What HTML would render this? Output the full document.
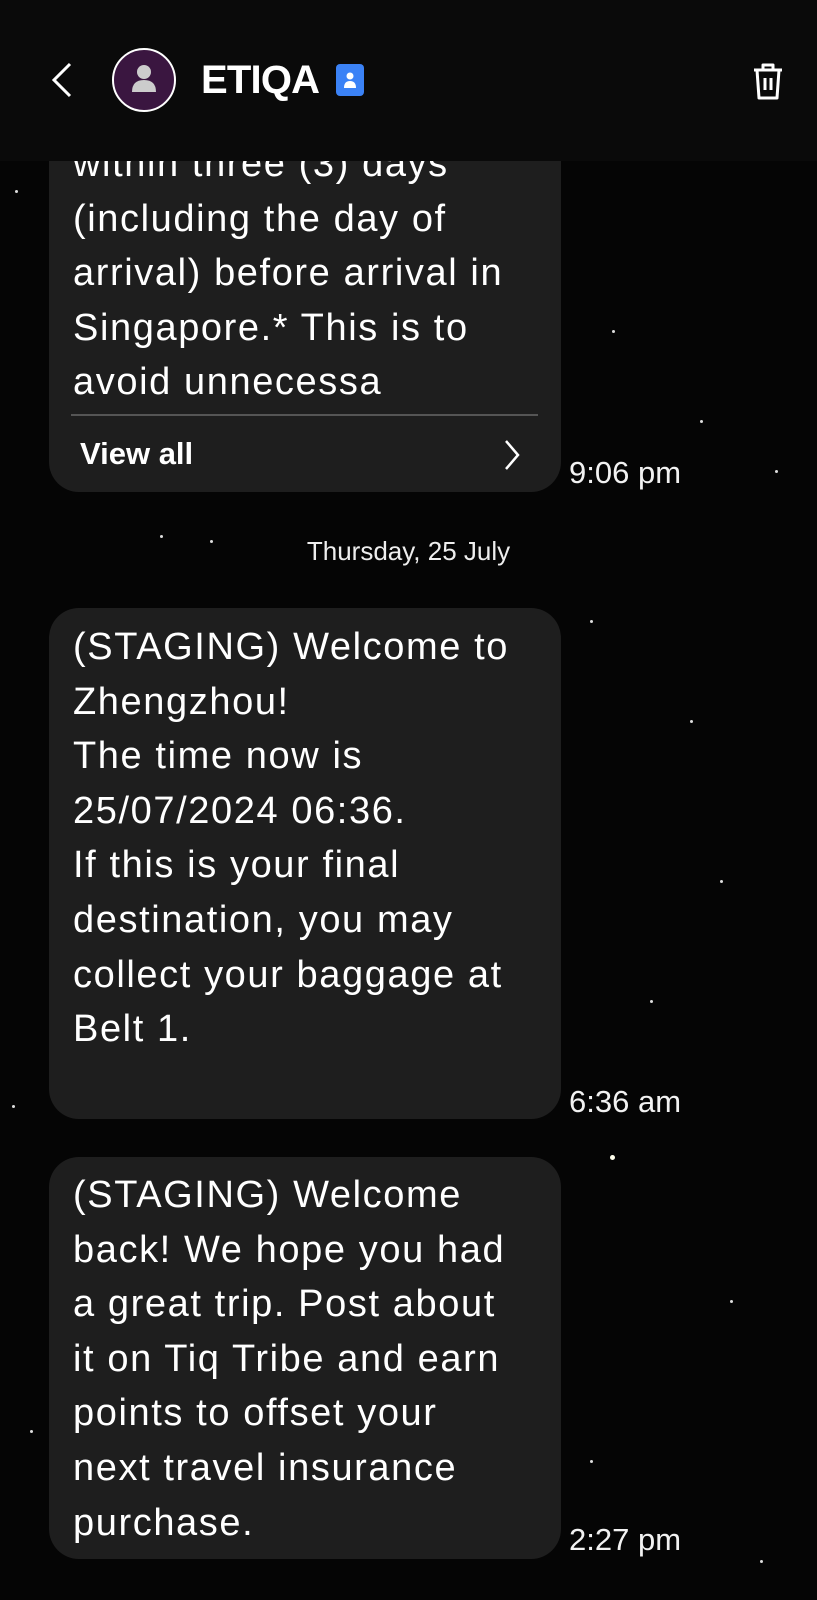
<!DOCTYPE html>
<html><head><style>
*{margin:0;padding:0;box-sizing:border-box}
body{width:817px;height:1600px;background:#050505;position:relative;overflow:hidden;font-family:"Liberation Sans",sans-serif;color:#fff}
.b{position:absolute;left:49px;width:512px;background:#1e1e1e;border-radius:30px}
.t{position:absolute;left:73px;font-size:38px;line-height:54.6px;white-space:nowrap;letter-spacing:1.6px}
.ts{position:absolute;left:569px;font-size:31px;color:#f2f2f2}
.s{position:absolute;background:#ddd;border-radius:50%;width:3px;height:3px}
.hdr{position:absolute;left:0;top:0;width:817px;height:161px;background:#0a0a0a;z-index:5}
</style></head><body>
<div class="s" style="left:15px;top:190px"></div><div class="s" style="left:612px;top:330px"></div><div class="s" style="left:700px;top:420px"></div><div class="s" style="left:775px;top:470px"></div><div class="s" style="left:590px;top:620px"></div><div class="s" style="left:690px;top:720px"></div><div class="s" style="left:720px;top:880px"></div><div class="s" style="left:650px;top:1000px"></div><div class="s" style="left:610px;top:1155px;width:5px;height:5px;background:#ffe"></div><div class="s" style="left:12px;top:1105px"></div><div class="s" style="left:730px;top:1300px"></div><div class="s" style="left:590px;top:1460px"></div><div class="s" style="left:210px;top:540px"></div><div class="s" style="left:160px;top:535px"></div><div class="s" style="left:760px;top:1560px"></div><div class="s" style="left:30px;top:1430px"></div>
<div class="hdr">
<svg style="position:absolute;left:48px;top:60px" width="30" height="40" viewBox="0 0 30 40"><path d="M22 4 L6 20 L22 36" stroke="#fff" stroke-width="3" fill="none"/></svg>
<div style="position:absolute;left:112px;top:48px;width:64px;height:64px;border-radius:50%;background:#3a1640;border:2px solid #fff"></div>
<svg style="position:absolute;left:112px;top:48px" width="64" height="64" viewBox="0 0 64 64"><circle cx="32" cy="24" r="7" fill="#ccc"/><path d="M20 44 q0 -12 12 -12 q12 0 12 12 z" fill="#ccc"/></svg>
<div style="position:absolute;left:201px;top:58px;font-size:40px;font-weight:bold;letter-spacing:-0.8px">ETIQA</div>
<div style="position:absolute;left:336px;top:64px;width:28px;height:32px;background:#3b82f6;border-radius:4px"></div>
<svg style="position:absolute;left:336px;top:64px" width="28" height="32" viewBox="0 0 28 32"><circle cx="14" cy="12" r="3.5" fill="#fff"/><path d="M8 24 q0 -7 6 -7 q6 0 6 7 z" fill="#fff"/></svg>
<svg style="position:absolute;left:750px;top:60px" width="36" height="42" viewBox="0 0 36 42"><path d="M4 10 H32 M13 10 V5 H23 V10 M7 10 L9 38 H27 L29 10 M15 18 V30 M21 18 V30" stroke="#fff" stroke-width="3" fill="none" stroke-linejoin="round"/></svg>
</div>
<div class="b" style="top:120px;height:372px"></div>
<div class="t" style="top:137px">within three (3) days<br>(including the day of<br>arrival) before arrival in<br>Singapore.* This is to<br>avoid unnecessa</div>
<div style="position:absolute;left:71px;top:414px;width:467px;height:2px;background:#555"></div>
<div style="position:absolute;left:80px;top:436px;font-size:31px;font-weight:bold">View all</div>
<svg style="position:absolute;left:502px;top:438px" width="20" height="34" viewBox="0 0 20 34"><path d="M4 3 L16 17 L4 31" stroke="#fff" stroke-width="2.5" fill="none"/></svg>
<div class="ts" style="top:455px">9:06 pm</div>
<div style="position:absolute;left:0;width:817px;text-align:center;top:536px;font-size:26px;color:#eee">Thursday, 25 July</div>
<div class="b" style="top:608px;height:511px"></div>
<div class="t" style="top:620px">(STAGING) Welcome to<br>Zhengzhou!<br>The time now is<br>25/07/2024 06:36.<br>If this is your final<br>destination, you may<br>collect your baggage at<br>Belt 1.</div>
<div class="ts" style="top:1084px">6:36 am</div>
<div class="b" style="top:1157px;height:402px"></div>
<div class="t" style="top:1168px">(STAGING) Welcome<br>back! We hope you had<br>a great trip. Post about<br>it on Tiq Tribe and earn<br>points to offset your<br>next travel insurance<br>purchase.</div>
<div class="ts" style="top:1522px">2:27 pm</div>
</body></html>
